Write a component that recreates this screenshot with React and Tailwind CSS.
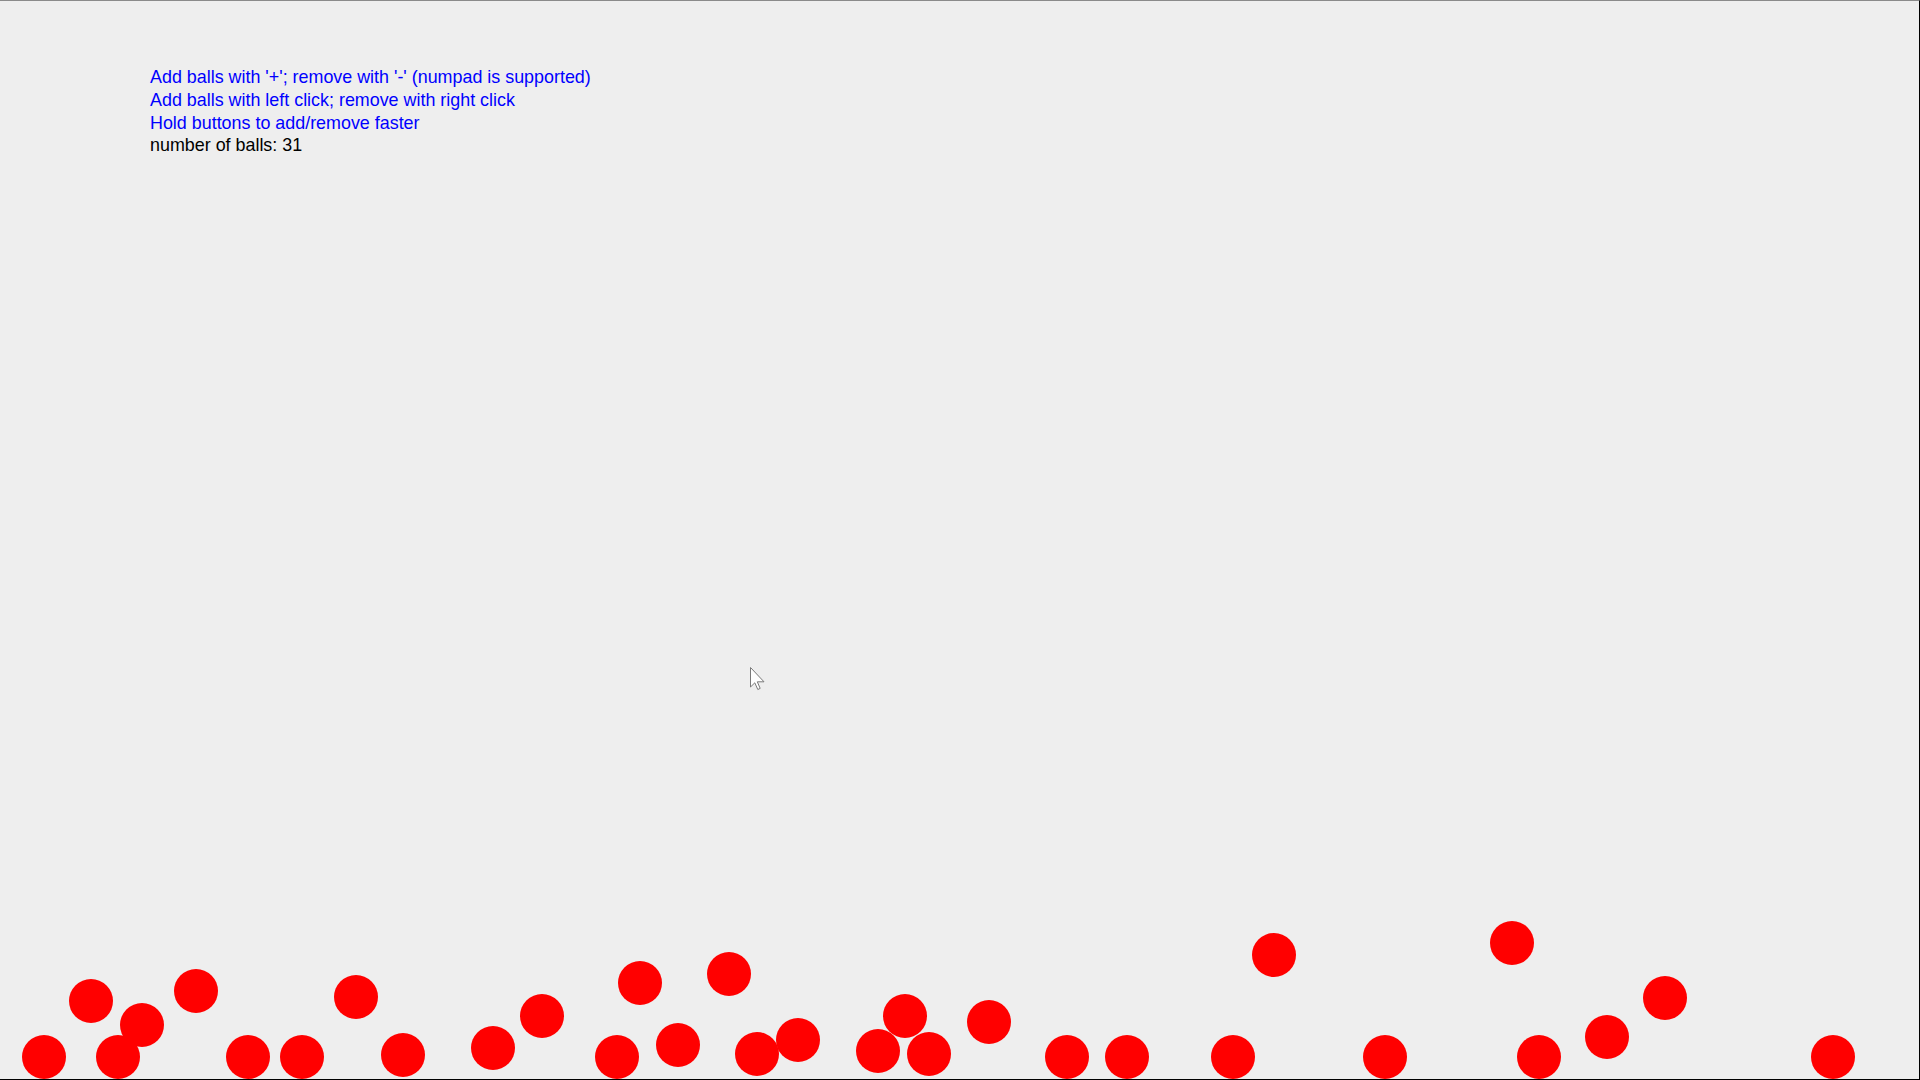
const balls = [
  'left-[22px] top-[1034px]',
  'left-[69px] top-[978px]',
  'left-[120px] top-[1002px]',
  'left-[96px] top-[1034px]',
  'left-[174px] top-[968px]',
  'left-[226px] top-[1034px]',
  'left-[280px] top-[1034px]',
  'left-[334px] top-[974px]',
  'left-[381px] top-[1032px]',
  'left-[471px] top-[1025px]',
  'left-[520px] top-[993px]',
  'left-[595px] top-[1034px]',
  'left-[618px] top-[960px]',
  'left-[707px] top-[951px]',
  'left-[656px] top-[1022px]',
  'left-[735px] top-[1031px]',
  'left-[776px] top-[1017px]',
  'left-[856px] top-[1028px]',
  'left-[883px] top-[993px]',
  'left-[907px] top-[1031px]',
  'left-[967px] top-[999px]',
  'left-[1045px] top-[1034px]',
  'left-[1105px] top-[1034px]',
  'left-[1211px] top-[1034px]',
  'left-[1252px] top-[932px]',
  'left-[1490px] top-[920px]',
  'left-[1643px] top-[975px]',
  'left-[1585px] top-[1014px]',
  'left-[1363px] top-[1034px]',
  'left-[1517px] top-[1034px]',
  'left-[1811px] top-[1034px]',
]

export default function App() {
  return (
    <div className="relative w-[1920px] h-[1080px] overflow-hidden bg-[#eeeeee] border-t border-t-[#8a8a8a] border-r border-b border-r-black border-b-black font-['Liberation_Sans',Arial,sans-serif]">
      {/* instructions */}
      <div className="pl-[150px] pt-[65px] text-[17.9px] leading-[22.8px]">
        <p className="text-[#0000ff]">Add balls with '+'; remove with '-' (numpad is supported)</p>
        <p className="text-[#0000ff]">Add balls with left click; remove with right click</p>
        <p className="text-[#0000ff]">Hold buttons to add/remove faster</p>
        <p className="text-black">number of balls: {balls.length}</p>
      </div>

      {/* balls on the canvas */}
      {balls.map((pos, i) => (
        <div key={i} className={`absolute w-[44px] h-[44px] rounded-full bg-[#ff0000] ${pos}`} />
      ))}

      {/* mouse pointer */}
      <svg className="absolute left-[750px] top-[666px]" width="16" height="24" viewBox="0 0 16 24">
        <path d="M0.5 0.5 L0.5 20 L4.8 15.8 L7.8 22.5 L10.2 21.4 L7.3 14.8 L14 14.8 Z" fill="#ffffff" stroke="#7a7a7a" strokeWidth="1" strokeLinejoin="round" />
      </svg>
    </div>
  )
}
